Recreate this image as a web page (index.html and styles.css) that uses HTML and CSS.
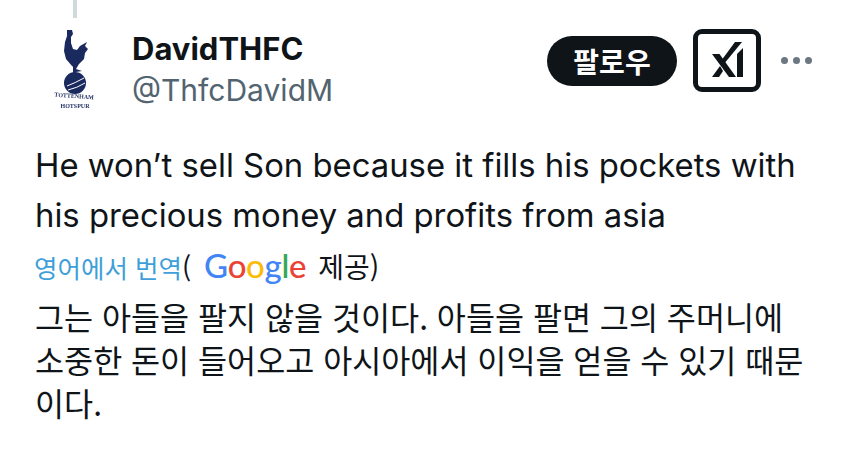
FILE: index.html
```html
<!DOCTYPE html>
<html lang="ko">
<head>
  <meta charset="UTF-8">
  <title>DavidTHFC</title>
  <link rel="stylesheet" href="styles.css">
</head>
<body>
  <div class="tweet">
    <div class="thread-line"></div>
    <header class="tweet-head">
      <div class="avatar">
        <svg width="80" height="82" viewBox="0 0 80 82">
          <g fill="#1b2a5e">
            <path d="M32 1 L37 1 L38 5 L36 8 L36 14 L38 20 L42 21 L45 17 L52 13 L50 17 L53 20 L50 24 L49 30 L44 35 L41 40 L37 37 L31 30 L29 22 L30 13 L32 7 Z"/>
            <path d="M38 37 L41 37 L41 40 L47 42 L41 43 L41 44 L38 44 Z"/>
            <circle cx="40" cy="54" r="11"/>
          </g>
          <path d="M32 57 Q40 54 49 49 M33 61 Q42 59 50 54" stroke="#fff" stroke-width="1" fill="none"/>
          <text class="crest-text" x="39" y="69" transform="rotate(4 39 69)">TOTTENHAM</text>
          <text class="crest-text" x="40" y="79">HOTSPUR</text>
        </svg>
      </div>
      <div class="names">
        <div class="display-name">DavidTHFC</div>
        <div class="handle">@ThfcDavidM</div>
      </div>
      <div class="actions">
        <button class="follow">팔로우</button>
        <div class="grok">
          <svg width="58" height="53" viewBox="0 0 58 53">
            <path d="M14 20 L21.500 20 L38 43 L31 43 Z" fill="#0f1419"/>
            <path d="M14 43 L21 43 L25 37 L22 32 Z" fill="#0f1419"/>
            <path d="M23 27 L37 8 L44 8 L25.500 30.500 Z" fill="#0f1419"/>
            <path d="M39 20 L45 14 L45 43 L39 43 Z" fill="#0f1419"/>
          </svg>
        </div>
        <div class="more"><span></span><span></span><span></span></div>
      </div>
    </header>

    <p class="tweet-text">He won’t sell Son because it fills his pockets with his precious money and profits from asia</p>

    <div class="translate-by">
      <span class="translate-link">영어에서 번역</span><span class="paren">(</span>
      <span class="google"><i class="blue">G</i><i class="red">o</i><i class="yellow">o</i><i class="blue">g</i><i class="green">l</i><i class="red">e</i></span>
      <span class="provided">제공)</span>
    </div>

    <p class="translated">그는 아들을 팔지 않을 것이다. 아들을 팔면 그의 주머니에 소중한 돈이 들어오고 아시아에서 이익을 얻을 수 있기 때문이다.</p>
  </div>
</body>
</html>
```

FILE: styles.css
```css
* { box-sizing: border-box; }
body {
  margin: 0;
  background: #fff;
  color: #0f1419;
  font-family: 'Inter', 'Noto Sans CJK KR', sans-serif;
}
.tweet {
  width: 850px;
  height: 454px;
  padding: 0 35px;
  overflow: hidden;
}
.thread-line {
  width: 4px;
  height: 18px;
  margin-left: 38px;
  background: #cfd9de;
}
.tweet-head {
  display: flex;
  align-items: flex-start;
  height: 90px;
  margin-top: 12px;
}
.avatar {
  width: 80px;
  height: 82px;
  margin-top: -1px;
  flex: none;
  filter: blur(0.4px);
}
.crest-text {
  font-family: 'Liberation Serif', serif;
  font-size: 6px;
  font-weight: 700;
  fill: #1b2a5e;
  text-anchor: middle;
}
.names {
  margin-left: 17px;
}
.display-name {
  font-size: 31px;
  font-weight: 700;
  line-height: 38px;
}
.handle {
  font-size: 30px;
  line-height: 44px;
  color: #536471;
}
.actions {
  margin-left: auto;
  display: flex;
  align-items: center;
  height: 63px;
  margin-top: -1px;
}
.follow {
  width: 130px;
  height: 50px;
  border: 0;
  border-radius: 25px;
  background: #0f1419;
  color: #fff;
  font-family: 'Noto Sans CJK KR', sans-serif;
  font-size: 28px;
  font-weight: 700;
  padding: 0;
}
.grok {
  width: 68px;
  height: 63px;
  margin-left: 16px;
  border: 5px solid #0f1419;
  border-radius: 9px;
  display: flex;
  align-items: center;
  justify-content: center;
}
.more {
  display: flex;
  gap: 5px;
  margin-left: 20px;
  margin-right: 3px;
}
.more span {
  width: 7px;
  height: 7px;
  border-radius: 50%;
  background: #6b7781;
}
.tweet-text {
  margin: 20px 0 0;
  font-size: 32.850px;
  line-height: 50px;
}
.translate-by {
  display: flex;
  align-items: center;
  height: 40px;
  margin-top: 6px;
  font-family: 'Noto Sans CJK KR', sans-serif;
  font-size: 25.500px;
}
.translate-link { color: #3f9fd8; margin-left: -1px; }
.paren {
  margin-right: 13px;
  font-size: 27px;
}
.google {
  font-family: 'Lato', sans-serif;
  font-size: 33px;
  font-weight: 500;
  letter-spacing: -0.300px;
  margin-right: 12px;
  margin-top: -3px;
}
.google i { font-style: normal; }
.blue { color: #4285f4; }
.red { color: #ea4335; }
.yellow { color: #fbbc05; }
.green { color: #34a853; }
.provided { font-size: 28px; }
.translated {
  margin: 9px 0 0;
  font-family: 'Noto Sans CJK KR', sans-serif;
  font-size: 31.600px;
  line-height: 43px;
}
```
